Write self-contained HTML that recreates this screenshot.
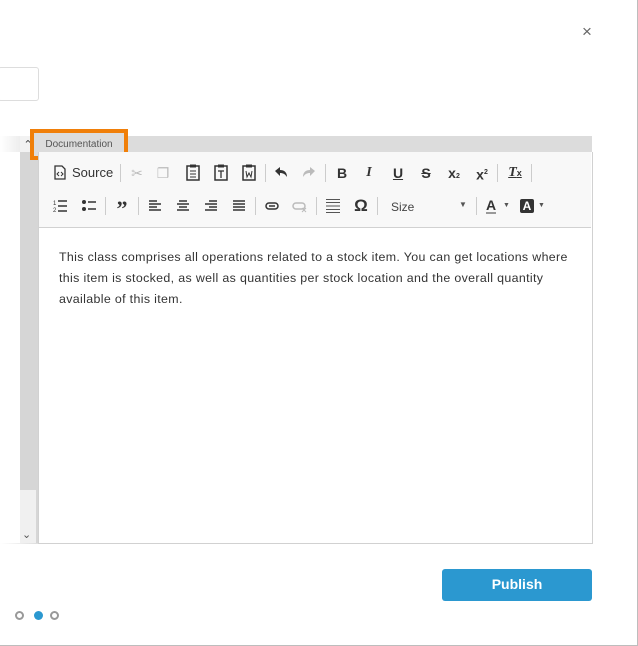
<!DOCTYPE html>
<html><head><meta charset="utf-8"><style>
body{margin:0;width:638px;height:646px;background:#fff;position:relative;overflow:hidden;font-family:"Liberation Sans",Arial,sans-serif}
.a{position:absolute}
.ic{position:absolute;font-size:14px;color:#333;text-align:center;width:20px;margin-left:-10px;line-height:16px}
.dis{color:#bbb}
.sep{position:absolute;width:1px;height:18px;background:#ccc}
</style></head><body>
<div class="a" style="right:0;top:0;width:1px;height:646px;background:#bdbdbd"></div>
<div class="a" style="left:0;bottom:0;width:638px;height:1px;background:#bdbdbd"></div>
<div class="a" style="left:582px;top:22px;font-size:17px;color:#666">×</div>
<div class="a" style="left:-2px;top:67px;width:39px;height:32px;border:1px solid #ddd;border-radius:3px"></div>
<div class="a" style="left:0;top:136px;width:592px;height:16px;background:linear-gradient(90deg,#fff 0,#dcdcdc 40px,#dcdcdc)"></div>
<div class="a" style="left:20px;top:136px;width:18px;height:408px;background:#d6d6d6"></div>
<div class="a" style="left:20px;top:136px;width:16px;height:16px;background:#f2f2f2;color:#444;font-size:11px;text-align:center;line-height:18px">&#8963;</div>
<div class="a" style="left:20px;top:490px;width:16px;height:54px;background:#f0f0f0"></div>
<div class="a" style="left:22px;top:528px;color:#555;font-size:11px">&#8964;</div>
<div class="a" style="left:0;top:543px;width:38px;height:1px;background:linear-gradient(90deg,#fff,#ddd)"></div>
<div class="a" style="left:30px;top:129px;width:90px;height:23px;border:4px solid #f07f09;background:#dcdcdc;font-size:10px;color:#555;line-height:23px;text-align:center">Documentation</div>
<div class="a" style="left:38px;top:152px;width:553px;height:391px;border:1px solid #d1d1d1;border-top:none;background:#fff"></div>
<div class="a" style="left:39px;top:152px;width:552px;height:75px;background:#f8f8f8;border-bottom:1px solid #d1d1d1"></div>
<svg class="a" style="left:54px;top:165px" width="12" height="15" viewBox="0 0 12 15"><path d="M1 1h7l3 3v10H1z" fill="none" stroke="#333" stroke-width="1.3"/><path d="M5 7l-2 2 2 2M7 7l2 2-2 2" fill="none" stroke="#333"/></svg>
<div class="a" style="left:72px;top:165px;font-size:13px;color:#333">Source</div>
<div class="sep" style="left:120px;top:164px"></div>
<div class="ic dis" style="left:137px;top:165px">✂</div>
<div class="ic dis" style="left:163px;top:165px">❐</div>
<svg class="a" style="left:186px;top:164px" width="14" height="17"><rect x="1" y="2" width="12" height="14" fill="none" stroke="#333" stroke-width="1.5"/><rect x="4" y="0.5" width="6" height="3" fill="#333"/><path d="M4 7h6M4 10h6M4 13h6" stroke="#333"/></svg>
<svg class="a" style="left:214px;top:164px" width="14" height="17"><rect x="1" y="2" width="12" height="14" fill="none" stroke="#333" stroke-width="1.5"/><rect x="4" y="0.5" width="6" height="3" fill="#333"/><path d="M4 7h6M7 7v7" stroke="#333" stroke-width="1.3"/></svg>
<svg class="a" style="left:242px;top:164px" width="14" height="17"><rect x="1" y="2" width="12" height="14" fill="none" stroke="#333" stroke-width="1.5"/><rect x="4" y="0.5" width="6" height="3" fill="#333"/><path d="M4 7l1 6 2-4 2 4 1-6" fill="none" stroke="#333"/></svg>
<div class="sep" style="left:265px;top:164px"></div>
<svg class="a" style="left:274px;top:166px" width="14" height="12"><path d="M1 5l5-4v3c4 0 7 2 7 7-2-3-4-4-7-4v3z" fill="#333"/></svg>
<svg class="a" style="left:302px;top:166px" width="14" height="12"><path d="M13 5l-5-4v3C4 4 1 6 1 11c2-3 4-4 7-4v3z" fill="#bbb"/></svg>
<div class="sep" style="left:325px;top:164px"></div>
<div class="ic" style="left:342px;top:165px;font-weight:bold">B</div>
<div class="ic" style="left:369px;top:165px;font-style:italic;font-family:'Liberation Serif',serif;font-weight:bold">I</div>
<div class="ic" style="left:398px;top:165px;font-weight:bold;text-decoration:underline">U</div>
<div class="ic" style="left:426px;top:165px;font-weight:bold;text-decoration:line-through">S</div>
<div class="ic" style="left:454px;top:165px;font-weight:bold">x<span style="font-size:7px">2</span></div>
<div class="ic" style="left:482px;top:165px;font-weight:bold">x<sup style="font-size:7px">2</sup></div>
<div class="sep" style="left:497px;top:164px"></div>
<div class="ic" style="left:515px;top:165px;font-style:italic;font-family:'Liberation Serif',serif;font-weight:bold;text-decoration:underline">T<span style="font-size:9px;font-style:normal;font-family:'Liberation Sans'">x</span></div>
<div class="sep" style="left:531px;top:164px"></div>
<svg class="a" style="left:53px;top:199px" width="14" height="14"><text x="0" y="6" font-size="6" fill="#333">1</text><text x="0" y="13" font-size="6" fill="#333">2</text><path d="M5 2h9M5 7h9M5 12h9" stroke="#333" stroke-width="1.5"/></svg>
<svg class="a" style="left:82px;top:199px" width="14" height="14"><circle cx="2" cy="3" r="2" fill="#333"/><circle cx="2" cy="10" r="2" fill="#333"/><path d="M6 3h8M6 10h8" stroke="#333" stroke-width="1.5"/></svg>
<div class="sep" style="left:105px;top:197px"></div>
<div class="ic" style="left:122px;top:198px;font-size:22px;font-weight:bold;font-family:'Liberation Serif',serif;line-height:22px">”</div>
<div class="sep" style="left:138px;top:197px"></div>
<svg class="a" style="left:149px;top:200px" width="13" height="12"><path d="M0 1h8M0 4h12M0 7h8M0 10h12" stroke="#333" stroke-width="1.6"/></svg>
<svg class="a" style="left:177px;top:200px" width="13" height="12"><path d="M2 1h8M0 4h12M2 7h8M0 10h12" stroke="#333" stroke-width="1.6"/></svg>
<svg class="a" style="left:205px;top:200px" width="13" height="12"><path d="M4 1h8M0 4h12M4 7h8M0 10h12" stroke="#333" stroke-width="1.6"/></svg>
<svg class="a" style="left:233px;top:200px" width="13" height="12"><path d="M0 1h12M0 4h12M0 7h12M0 10h12" stroke="#333" stroke-width="1.6"/></svg>
<div class="sep" style="left:255px;top:197px"></div>
<svg class="a" style="left:265px;top:202px" width="14" height="8"><rect x="1" y="1" width="12" height="6" rx="3" fill="none" stroke="#333" stroke-width="1.5"/><path d="M4 4h6" stroke="#333" stroke-width="1.5"/></svg>
<svg class="a" style="left:292px;top:202px" width="16" height="11"><rect x="1" y="1" width="12" height="6" rx="3" fill="none" stroke="#bbb" stroke-width="1.5"/><path d="M10 6l4 4M14 6l-4 4" stroke="#bbb"/></svg>
<div class="sep" style="left:316px;top:197px"></div>
<svg class="a" style="left:326px;top:198px" width="14" height="16"><path d="M0 1.5h14M0 4.5h14M0 8h14M0 11.5h14M0 14.5h14" stroke="#555" stroke-width="1"/></svg>
<div class="ic" style="left:361px;top:198px;font-size:17px;font-weight:bold">Ω</div>
<div class="sep" style="left:377px;top:197px"></div>
<div class="a" style="left:391px;top:200px;font-size:12px;color:#444">Size</div>
<div class="a" style="left:459px;top:200px;font-size:8px;color:#555">▼</div>
<div class="sep" style="left:476px;top:197px"></div>
<div class="a" style="left:486px;top:198px;font-size:14px;font-weight:bold;color:#333;border-bottom:2px solid #999;line-height:14px">A</div>
<div class="a" style="left:503px;top:202px;font-size:7px;color:#555">▼</div>
<div class="a" style="left:520px;top:199px;width:14px;height:14px;background:#333;color:#fff;font-size:12px;font-weight:bold;text-align:center;line-height:14px;border-radius:2px">A</div>
<div class="a" style="left:538px;top:202px;font-size:7px;color:#555">▼</div>
<div class="a" style="left:59px;top:247px;width:520px;font-size:12.4px;letter-spacing:0.35px;line-height:21px;color:#333">This class comprises all operations related to a stock item. You can get locations where this item is stocked, as well as quantities per stock location and the overall quantity available of this item.</div>
<div class="a" style="left:442px;top:569px;width:150px;height:32px;background:#2b98d0;border-radius:3px;color:#fff;font-weight:bold;font-size:14px;text-align:center;line-height:30px">Publish</div>
<div class="a" style="left:15px;top:611px;width:5px;height:5px;border:2px solid #999;border-radius:50%"></div>
<div class="a" style="left:34px;top:611px;width:9px;height:9px;background:#2b98d0;border-radius:50%"></div>
<div class="a" style="left:50px;top:611px;width:5px;height:5px;border:2px solid #999;border-radius:50%"></div>
</body></html>
